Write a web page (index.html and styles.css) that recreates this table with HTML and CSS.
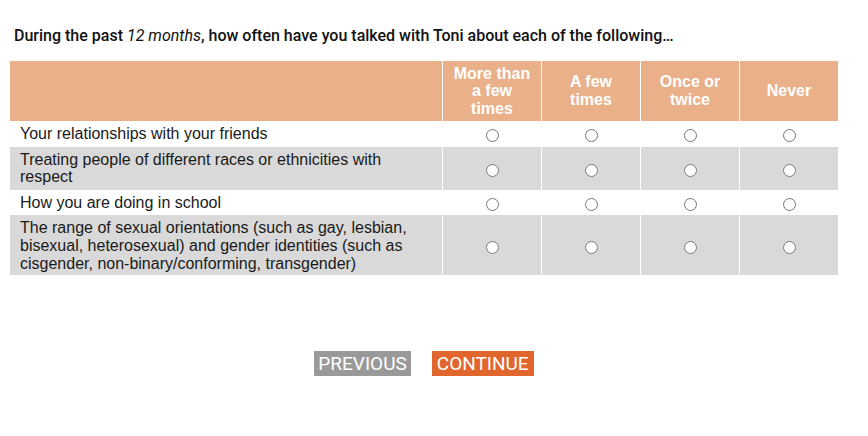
FILE: index.html
```html
<!DOCTYPE html>
<html>
<head>
<meta charset="utf-8">
<link rel="stylesheet" href="styles.css">
</head>
<body>
<div class="page">
  <p class="question">During the past <em>12 months</em>, how often have you talked with Toni about each of the following…</p>
  <table class="grid">
    <thead>
      <tr>
        <th class="label-col"></th>
        <th>More than a few times</th>
        <th>A few times</th>
        <th>Once or twice</th>
        <th>Never</th>
      </tr>
    </thead>
    <tbody>
      <tr class="r1">
        <td class="label">Your relationships with your friends</td>
        <td><input type="radio" name="q1"></td>
        <td><input type="radio" name="q1"></td>
        <td><input type="radio" name="q1"></td>
        <td><input type="radio" name="q1"></td>
      </tr>
      <tr class="alt r2">
        <td class="label">Treating people of different races or ethnicities with respect</td>
        <td><input type="radio" name="q2"></td>
        <td><input type="radio" name="q2"></td>
        <td><input type="radio" name="q2"></td>
        <td><input type="radio" name="q2"></td>
      </tr>
      <tr class="r3">
        <td class="label">How you are doing in school</td>
        <td><input type="radio" name="q3"></td>
        <td><input type="radio" name="q3"></td>
        <td><input type="radio" name="q3"></td>
        <td><input type="radio" name="q3"></td>
      </tr>
      <tr class="alt r4">
        <td class="label">The range of sexual orientations (such as gay, lesbian, bisexual, heterosexual) and gender identities (such as cisgender, non-binary/conforming, transgender)</td>
        <td><input type="radio" name="q4"></td>
        <td><input type="radio" name="q4"></td>
        <td><input type="radio" name="q4"></td>
        <td><input type="radio" name="q4"></td>
      </tr>
    </tbody>
  </table>
  <div class="nav">
    <button class="btn prev">PREVIOUS</button>
    <button class="btn next">CONTINUE</button>
  </div>
</div>
</body>
</html>
```

FILE: styles.css
```css
html, body {
  margin: 0;
  padding: 0;
  background: #ffffff;
}
.page {
  padding: 25px 30px 0 10px;
}
.question {
  margin: 0 0 15px 4px;
  font-family: Roboto, "Liberation Sans", sans-serif;
  font-weight: 500;
  font-size: 16px;
  line-height: 21px;
  color: #111;
}
.question em {
  font-style: italic;
  font-weight: 400;
}
.grid {
  width: 828px;
  border-collapse: separate;
  border-spacing: 0;
  table-layout: fixed;
  font-family: "Liberation Sans", Arial, sans-serif;
  font-size: 16px;
  color: #1a1a1a;
}
.grid th {
  background: #eab08a;
  color: #ffffff;
  font-weight: bold;
  font-size: 16px;
  line-height: 17.6px;
  height: 60px;
  padding: 0 8px;
  box-sizing: border-box;
  width: 99px;
  border-left: 1px solid #ffffff;
  text-align: center;
  vertical-align: middle;
}
.grid th.label-col {
  width: 432px;
  border-left: none;
}
.grid td {
  padding: 4px 0;
  line-height: 17.6px;
  text-align: center;
  vertical-align: middle;
  border-left: 1px solid #ffffff;
}
.grid td.label {
  text-align: left;
  padding: 4px 20px 4px 10px;
  border-left: none;
}
.grid tr.r4 td {
  padding-bottom: 3px;
}
.grid tr.alt td {
  background: #d9d9d9;
}
.grid input[type="radio"] {
  margin: 2px 0 0 0;
  width: 13px;
  height: 13px;
  vertical-align: middle;
}
.nav {
  display: flex;
  justify-content: center;
  gap: 21px;
  margin-top: 76px;
}
.btn {
  border: none;
  font-family: Roboto, "Liberation Sans", sans-serif;
  font-size: 19px;
  line-height: 25px;
  height: 25px;
  padding: 0 5px;
  color: #ffffff;
  cursor: pointer;
}
.prev {
  background: #999999;
  padding: 0 4px;
}
.next {
  background: #e0662e;
}
```
